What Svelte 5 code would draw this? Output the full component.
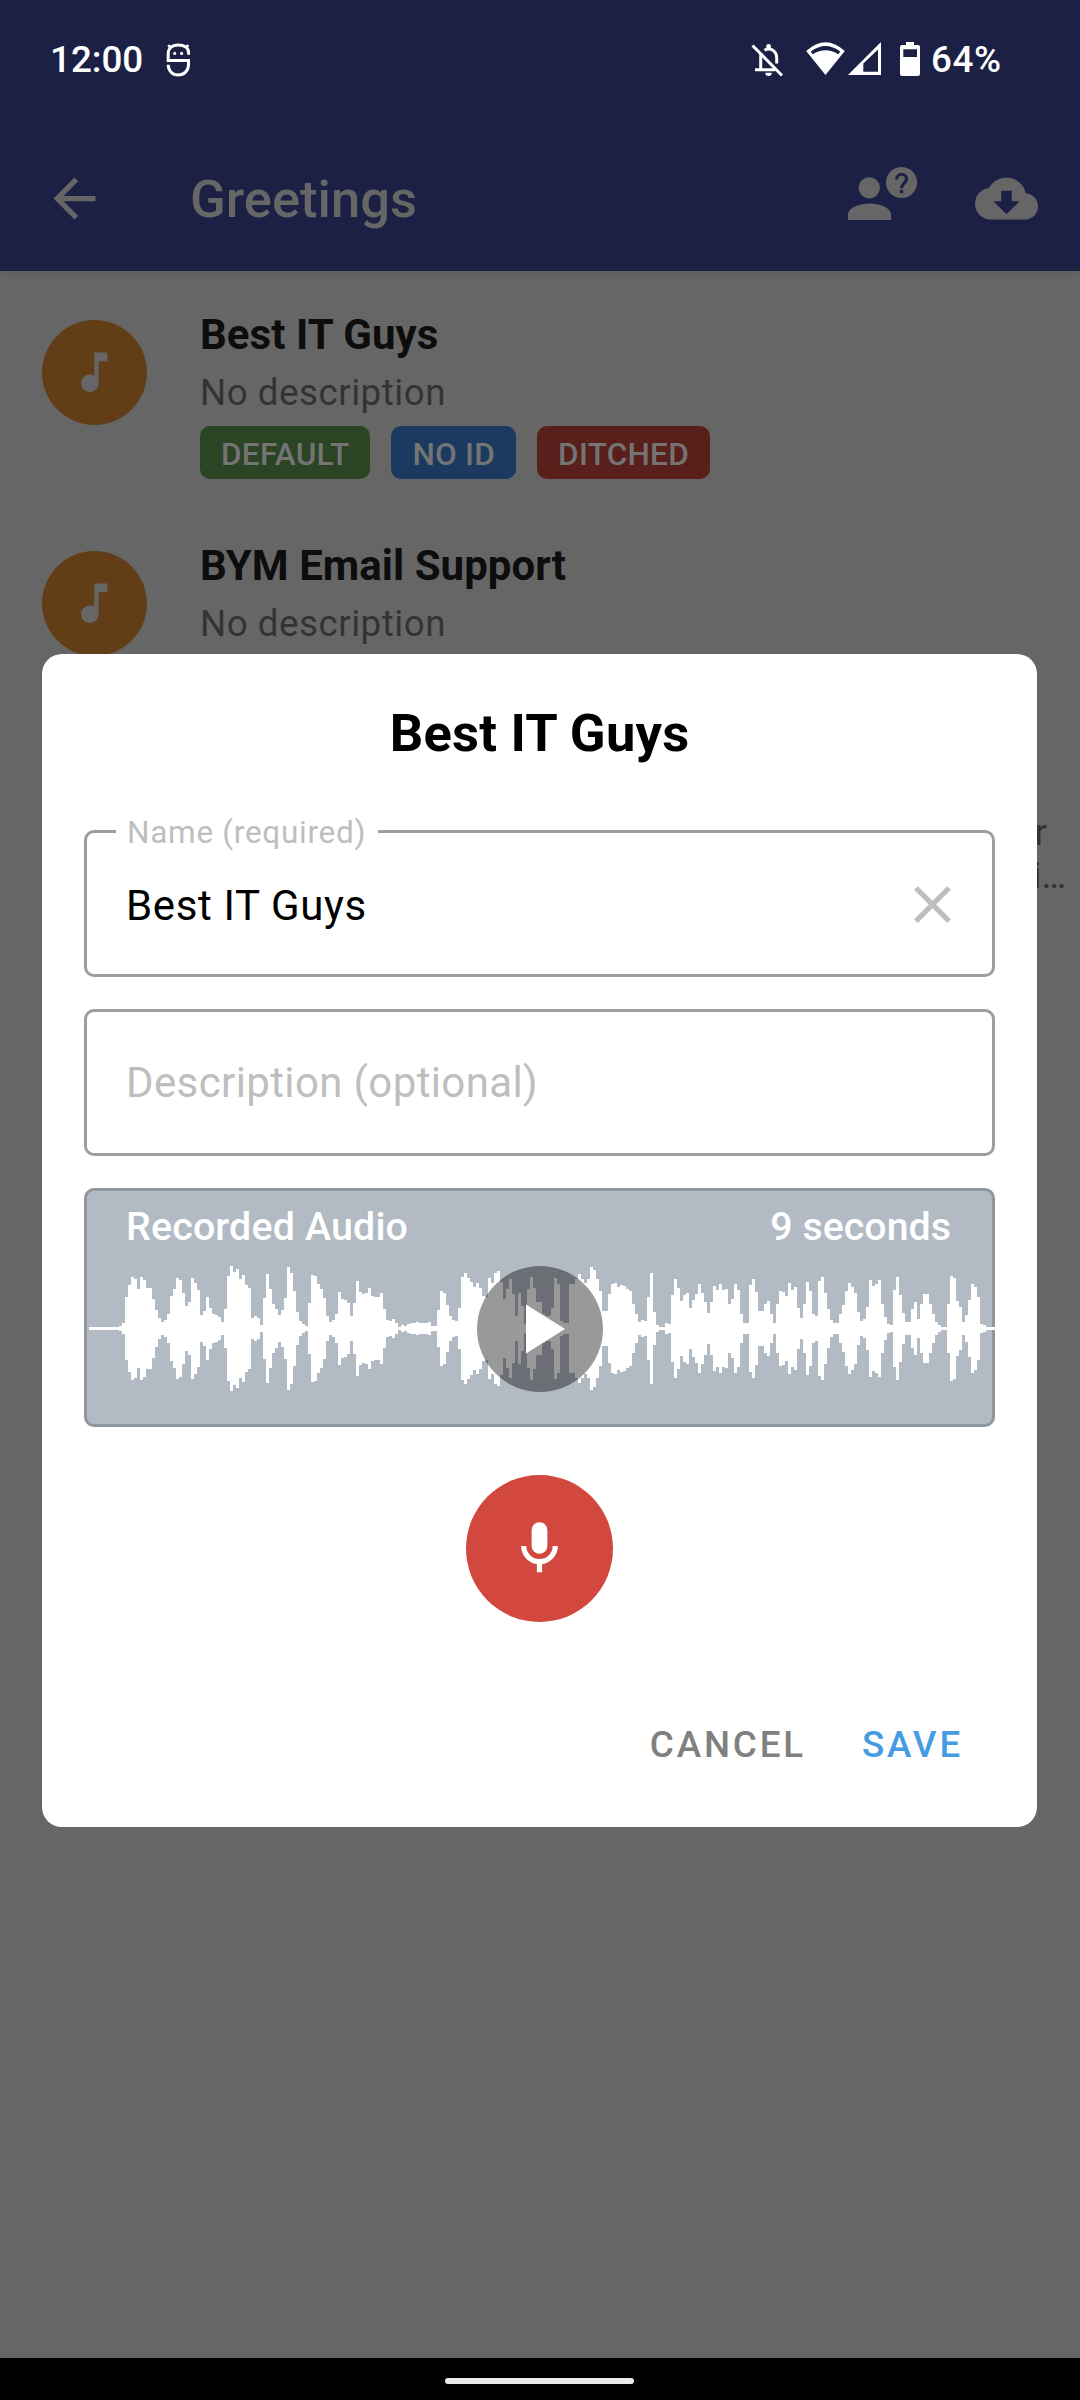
<script>
  const greetings = [
    {
      title: 'Best IT Guys',
      badges: [
        { label: 'DEFAULT', tone: 'green' },
        { label: 'NO ID', tone: 'blue' },
        { label: 'DITCHED', tone: 'red' }
      ]
    },
    { title: 'BYM Email Support', badges: [] }
  ];

  // Half-height in pixels of every 3px waveform column.
  const levels = [
    2, 2, 2, 2, 2, 2, 2, 2, 2, 2, 3, 6, 32, 44, 52, 50, 40, 52, 49, 41, 41, 30, 19, 11, 7, 9, 15, 33, 40, 51, 49,
    36, 23, 27, 51, 46, 39, 14, 18, 32, 21, 15, 14, 12, 7, 20, 53, 63, 57, 60, 50, 54, 44, 41, 11, 13, 11, 4, 31,
    55, 40, 25, 20, 14, 19, 31, 62, 56, 38, 17, 8, 5, 3, 26, 54, 53, 45, 40, 31, 13, 7, 9, 15, 37, 30, 29, 26, 13,
    26, 48, 37, 35, 36, 41, 33, 32, 32, 36, 20, 9, 8, 10, 6, 2, 4, 3, 5, 6, 6, 7, 6, 6, 6, 7, 3, 3, 19, 38, 36, 24,
    13, 9, 8, 21, 52, 56, 51, 47, 42, 46, 41, 33, 32, 51, 46, 56, 58, 47, 30, 40, 50, 35, 13, 36, 23, 5, 40, 52,
    41, 27, 27, 15, 13, 13, 21, 51, 45, 8, 6, 6, 45, 45, 50, 55, 50, 46, 50, 62, 59, 50, 38, 18, 18, 35, 45, 46,
    42, 44, 43, 40, 38, 25, 15, 7, 9, 8, 32, 56, 17, 4, 2, 2, 6, 5, 34, 50, 41, 28, 34, 36, 21, 29, 35, 45, 36, 27,
    16, 27, 43, 39, 45, 39, 40, 25, 30, 45, 39, 15, 6, 6, 44, 50, 37, 18, 18, 25, 28, 15, 6, 25, 38, 37, 33, 46,
    39, 42, 21, 11, 25, 47, 38, 15, 13, 48, 52, 36, 20, 9, 6, 6, 15, 24, 38, 46, 42, 36, 17, 8, 10, 22, 49, 43,
    45, 49, 25, 12, 5, 4, 39, 52, 34, 16, 7, 7, 20, 27, 10, 25, 35, 35, 25, 15, 7, 4, 2, 2, 25, 53, 51, 28, 22, 7,
    14, 29, 45, 42, 32, 5, 4, 2, 2, 2
  ];
  const bars = levels.map((h, i) => `M${i * 3} ${64 - h}h3v${h * 2 - 1}h-3z`).join('');
</script>

<div class="screen">
  <header>
    <div class="status">
      <span class="clock">12:00</span>
      <svg class="debug" viewBox="165 42 27 36" width="27" height="36" fill="none" stroke="#fff" stroke-width="3">
        <path d="M188.6 54.8V53C188.6 47.800 184.500 45 178.200 45S168.200 48.300 168.200 54V60.500H188.500V64.500C188.500 71 184 75 178.300 75S168.200 71 168.200 64.800" />
        <path d="M170.500 47.500l-2.300-2.300M186 47.500l2.300-2.300" stroke-width="2.600" />
        <circle cx="174.700" cy="53.400" r="1.600" fill="#fff" stroke="none" />
        <circle cx="181.600" cy="53.400" r="1.600" fill="#fff" stroke="none" />
      </svg>
      <div class="status-end">
        <svg viewBox="750 42 34 36" width="34" height="36" fill="none" stroke="#fff" stroke-width="3">
          <path d="M752.500 45.500L782 75.500" />
          <path d="M755 69.700H775M760.700 70V56.500Q760.700 54.500 761.500 53M764.500 50.200Q768.500 47.800 772.500 50Q776.700 52.600 776.700 58V63.500" />
          <path d="M766.300 48.500v-2.200a2.300 2.300 0 0 1 4.600 0v2.200zM765.300 72.700h6.400a3.200 3.200 0 0 1-6.400 0z" fill="#fff" stroke="none" />
        </svg>
        <svg class="wifi" viewBox="806 42 39 34" width="39" height="34" fill="#fff">
          <path fill-rule="evenodd" d="M806.200 51Q825.500 33.500 844.800 51L825.500 75ZM810.800 51.500L812.700 54.200Q825.500 46.500 838.300 54.200L840.200 51.500Q825.500 40.500 810.800 51.500Z" />
        </svg>
        <svg viewBox="848 42 34 34" width="34" height="34" fill="#fff">
          <path fill-rule="evenodd" d="M848 75L881 42V75ZM863.300 63.500V71.800H878V49.500Z" />
        </svg>
        <svg class="battery" viewBox="900 42 20 34" width="20" height="34" fill="#fff">
          <path fill-rule="evenodd" d="M906 42h8v3h4a2 2 0 0 1 2 2v27a2 2 0 0 1-2 2h-16a2 2 0 0 1-2-2V47a2 2 0 0 1 2-2h4zM903.300 49.200V57H917V49.200Z" />
        </svg>
        <span class="charge">64%</span>
      </div>
    </div>

    <div class="toolbar">
      <svg viewBox="0 0 24 24" width="63" height="63" fill="#666">
        <path d="M20 11H7.830l5.590-5.590L12 4l-8 8 8 8 1.410-1.410L7.830 13H20v-2z" />
      </svg>
      <h1>Greetings</h1>
      <svg class="contact" viewBox="848 166 70 56" width="70" height="56" fill="#666">
        <circle cx="869.300" cy="187.800" r="10.600" />
        <path d="M848 220v-5.300c0-7.200 11.500-11.200 21.500-11.200s21.500 4 21.500 11.200v5.300z" />
        <circle cx="901.500" cy="182.500" r="15.600" />
        <path d="M896.700 179.500c0-3 2.200-5.200 4.900-5.200s4.900 2.100 4.900 4.900c0 4-5 4.200-5 9.200" fill="none" stroke="#1b2044" stroke-width="3.100" />
        <path d="M899.900 190h3.200v3.200h-3.200z" fill="#1b2044" />
      </svg>
      <svg viewBox="0 0 24 24" width="63" height="63" fill="#666">
        <path d="M19.350 10.040C18.670 6.590 15.640 4 12 4 9.110 4 6.600 5.640 5.350 8.040 2.340 8.360 0 10.910 0 14c0 3.310 2.690 6 6 6h13c2.760 0 5-2.240 5-5 0-2.640-2.050-4.780-4.650-4.960zM17 13l-5 5-5-5h3V9h4v4h3z" />
      </svg>
    </div>
  </header>

  <main>
    {#each greetings as item}
      <article>
        <div class="avatar">
          <svg viewBox="0 0 24 24" width="52.500" height="52.500" fill="#666">
            <path d="M12 3v10.550c-.59-.34-1.270-.55-2-.55-2.210 0-4 1.790-4 4s1.790 4 4 4 4-1.790 4-4V7h4V3h-6z" />
          </svg>
        </div>
        <div class="info">
          <h2>{item.title}</h2>
          <p>No description</p>
          <div class="badges">
            {#each item.badges as badge}
              <span class="badge {badge.tone}">{badge.label}</span>
            {/each}
          </div>
        </div>
      </article>
    {/each}
    <div class="overflow">
      <span class="first">r</span>
      <span>i…</span>
    </div>
  </main>

  <footer><span></span></footer>

  <section class="dialog">
    <h3>Best IT Guys</h3>
    <div class="field">
      <span class="label">Name (required)</span>
      <span class="value">Best IT Guys</span>
      <svg viewBox="0 0 24 24" width="63" height="63" fill="#bebebe">
        <path d="M19 6.410L17.590 5 12 10.590 6.410 5 5 6.410 10.590 12 5 17.590 6.410 19 12 13.410 17.590 19 19 17.590 13.410 12z" />
      </svg>
    </div>
    <div class="field">
      <span class="placeholder">Description (optional)</span>
    </div>
    <div class="audio">
      <div class="caption"><span class="name">Recorded Audio</span><span>9 seconds</span></div>
      <svg class="wave" viewBox="0 0 906 128" width="906" height="128" shape-rendering="crispEdges">
        <path d={bars} fill="#fff" />
      </svg>
      <div class="play">
        <svg viewBox="0 0 126 126" width="126" height="126"><path d="M49 38.500L88 63L49 87.500Z" fill="#fff" /></svg>
      </div>
    </div>
    <div class="mic">
      <svg viewBox="0 0 24 24" width="63" height="63" fill="#fff">
        <path d="M12 2a3 3 0 0 1 3 3v6a3 3 0 0 1-3 3 3 3 0 0 1-3-3V5a3 3 0 0 1 3-3m7 9c0 3.530-2.610 6.440-6 6.930V21h-2v-3.070c-3.390-.49-6-3.400-6-6.930h2a5 5 0 0 0 5 5 5 5 0 0 0 5-5h2z" />
      </svg>
    </div>
    <div class="actions">
      <span class="cancel">CANCEL</span>
      <span class="save">SAVE</span>
    </div>
  </section>
</div>

<style>
  :global(body) { margin: 0; background: #666; }
  .screen {
    position: relative;
    display: flex;
    flex-direction: column;
    width: 1080px;
    height: 2400px;
    overflow: hidden;
    background: #666;
    font-family: Roboto, sans-serif;
  }
  svg { display: block; flex: none; }
  h1, h2, h3, p { margin: 0; white-space: nowrap; }
  span { white-space: nowrap; }

  header {
    flex: none;
    height: 271px;
    background: #1b2044;
    box-shadow: 0 2px 8px rgba(0, 0, 0, 0.1);
  }
  .status {
    display: flex;
    align-items: flex-start;
    box-sizing: border-box;
    height: 120px;
    padding: 42px 75px 0 50px;
    color: #fff;
    font-size: 36.750px;
    font-weight: 500;
    line-height: 35px;
  }
  .clock { width: 115px; }
  .status-end { display: flex; margin-left: auto; }
  .wifi { margin: 0 3px 0 22px; }
  .battery { margin: 0 11px 0 18px; }
  .charge { width: 74px; letter-spacing: 0.600px; }
  .toolbar {
    display: flex;
    align-items: center;
    height: 157px;
    padding: 0 42px 0 43px;
  }
  h1 {
    margin-left: 84px;
    color: #666;
    font-size: 52.500px;
    font-weight: 500;
    line-height: 62px;
  }
  .contact { margin: -10px 57px 0 auto; }

  main { flex: 1; min-height: 0; }
  article {
    display: flex;
    box-sizing: border-box;
    height: 231px;
    padding: 39px 0 0 42px;
  }
  .avatar {
    display: grid;
    place-items: center;
    width: 105px;
    height: 105px;
    margin: 10px 53px 0 0;
    border-radius: 50%;
    background: #613e16;
  }
  h2 {
    color: #0d0d0d;
    font-size: 42px;
    font-weight: 700;
    line-height: 49px;
    letter-spacing: 0.060px;
  }
  p {
    margin-top: 12px;
    color: #333;
    font-size: 36.750px;
    line-height: 43px;
    letter-spacing: 0.500px;
  }
  .badges { display: flex; gap: 21px; margin-top: 12px; }
  .badge {
    padding: 0 21px;
    border-radius: 10px;
    color: #747474;
    font-size: 31.500px;
    font-weight: 500;
    line-height: 57px;
    height: 53px;
    letter-spacing: 0.260px;
  }
  .green { background: #2a4424; }
  .blue { background: #1c3a60; }
  .red { background: #59201b; }
  .overflow {
    display: flex;
    flex-direction: column;
    align-items: flex-end;
    margin-top: 78px;
    padding-right: 14px;
    color: #333;
    font-size: 36.750px;
    line-height: 43px;
  }
  .first { margin-right: 19px; }

  footer {
    display: flex;
    justify-content: center;
    flex: none;
    height: 42px;
    padding-right: 1px;
    background: #000;
  }
  footer span {
    width: 189px;
    height: 6px;
    margin-top: 20px;
    border-radius: 3px;
    background: #ebebeb;
  }

  .dialog {
    position: absolute;
    top: 654px;
    left: 42px;
    display: flex;
    flex-direction: column;
    box-sizing: border-box;
    width: 995px;
    height: 1173px;
    padding: 48px 42px 0;
    border-radius: 20px;
    background: #fff;
  }
  h3 {
    margin-bottom: 66px;
    color: #000;
    font-size: 52.500px;
    font-weight: 700;
    line-height: 62px;
    letter-spacing: 0.220px;
    text-align: center;
  }
  .field {
    position: relative;
    display: flex;
    align-items: center;
    justify-content: space-between;
    box-sizing: border-box;
    height: 147px;
    margin-bottom: 32px;
    padding: 0 28px 0 39px;
    border: 3px solid #9e9e9e;
    border-radius: 10px;
    font-size: 42px;
    letter-spacing: 0.380px;
  }
  .field svg { margin-top: 2px; }
  .label {
    position: absolute;
    top: -19px;
    left: 29px;
    padding: 0 12px 0 11px;
    background: #fff;
    color: #bebebe;
    font-size: 31.500px;
    line-height: 37px;
    letter-spacing: 0.720px;
  }
  .value { padding-top: 3px; letter-spacing: 0.640px; }
  .placeholder { color: #bebebe; }
  .audio {
    position: relative;
    box-sizing: border-box;
    height: 239px;
    border: 3px solid #8f979f;
    border-radius: 10px;
    background: #b2bac4;
  }
  .caption {
    display: flex;
    justify-content: space-between;
    padding: 12px 41px 0 39px;
    color: #fff;
    font-size: 39.375px;
    font-weight: 500;
    line-height: 48px;
  }
  .name { letter-spacing: 0.160px; }
  .wave { margin: 14px 0 0 2px; }
  .play {
    position: absolute;
    top: 75px;
    left: 390px;
    border-radius: 50%;
    background: rgba(0, 0, 0, 0.4);
  }
  .mic {
    display: grid;
    place-items: center;
    align-self: center;
    width: 147px;
    height: 147px;
    margin-top: 48px;
    border-radius: 50%;
    background: #d2483e;
  }
  .actions {
    display: flex;
    justify-content: flex-end;
    gap: 56px;
    margin-top: 101px;
    padding-right: 32px;
    font-size: 36.750px;
    font-weight: 500;
    line-height: 43px;
    letter-spacing: 2.850px;
  }
  .cancel { color: #808080; }
  .save { color: #459ce2; }
</style>
